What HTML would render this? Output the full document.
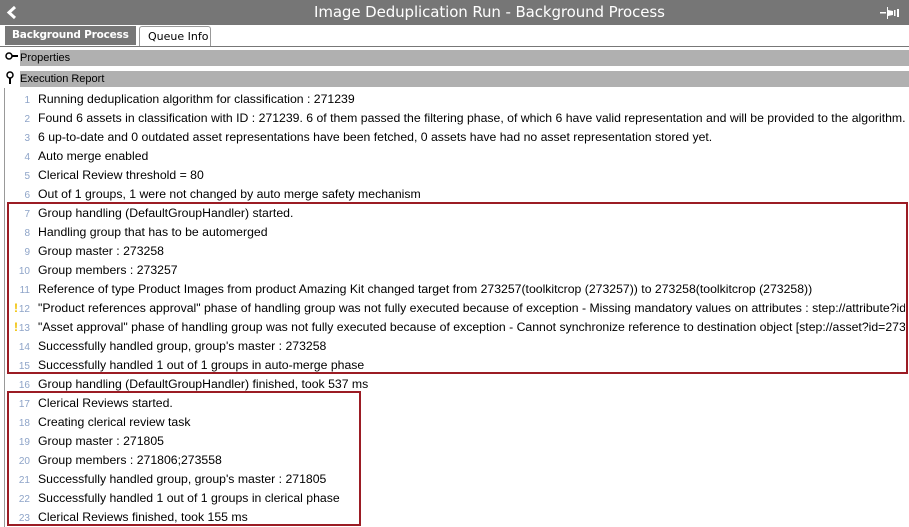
<!DOCTYPE html>
<html><head><style>
*{margin:0;padding:0;box-sizing:border-box}
body{width:909px;height:527px;overflow:hidden;background:#fff;font-family:"Liberation Sans",sans-serif;position:relative}
.titlebg{position:absolute;left:0;top:0;width:909px;height:25px;background:#767676}
.title{position:absolute;left:314px;top:0;height:25px;color:#fff;font-family:"DejaVu Sans",sans-serif;font-size:15px;line-height:25px;white-space:nowrap;letter-spacing:-0.1px}
.tab1{position:absolute;left:5px;top:26px;width:131px;height:19px;background:#777;color:#fff;font-family:"DejaVu Sans",sans-serif;font-weight:bold;font-size:10.5px;line-height:18px;padding-left:7px;white-space:nowrap;overflow:hidden;letter-spacing:-0.2px}
.tab2{position:absolute;left:139px;top:26px;width:72px;height:20px;border:1px solid #999;border-bottom:none;border-radius:3px 3px 0 0;font-family:"DejaVu Sans",sans-serif;font-size:11px;line-height:19px;padding-left:8px;color:#000;white-space:nowrap}
.sep{position:absolute;left:0;top:46px;width:909px;height:1px;background:#777}
.bar{position:absolute;left:20px;width:889px;height:16px;background:#b0b0b0;font-size:11px;line-height:16px;color:#000}
.vl{position:absolute;left:4px;top:88px;width:1px;height:439px;background:#999}
.row{position:absolute;left:0;height:19px;width:909px;white-space:nowrap;overflow:hidden;font-size:12.25px;line-height:19px;color:#000}
.row .n{display:inline-block;width:34px;text-align:right;font-size:10px;color:#8ea4c8;padding-right:4px}
.row .t{position:absolute;left:38px;top:0;width:867px;overflow:hidden}
.w{position:absolute;left:14px;top:0;color:#f0c000;font-weight:bold;font-size:12px}
.box{position:absolute;border:2px solid #9b1c24}
</style></head><body>
<div class="titlebg"></div>
<div class="title">Image Deduplication Run - Background Process</div>
<svg style="position:absolute;left:5px;top:5px" width="14" height="15"><path d="M10 2 L4 7.5 L10 13" stroke="#fff" stroke-width="3" fill="none"/></svg>
<svg style="position:absolute;left:880px;top:6px" width="24" height="14"><rect x="0" y="6" width="6" height="1.5" fill="#fff"/><path d="M7 1 L8 1 L8 13 L7 13 Z M8 4 L13 5 L13 9 L8 10 Z" fill="#fff"/><rect x="14" y="4" width="1.5" height="6" fill="#fff"/><rect x="17" y="3" width="2" height="8" fill="#fff"/></svg>
<div class="tab1">Background Process</div>
<div class="tab2">Queue Info</div>
<div class="sep"></div>
<div class="bar" style="top:50px">Properties</div>
<svg style="position:absolute;left:5px;top:51px" width="14" height="10"><circle cx="4" cy="5" r="3" stroke="#000" stroke-width="1.5" fill="none"/><rect x="7" y="4" width="6" height="2" fill="#000"/></svg>
<div class="bar" style="top:71px">Execution Report</div>
<svg style="position:absolute;left:5px;top:71px" width="10" height="14"><circle cx="5" cy="4" r="3" stroke="#000" stroke-width="1.5" fill="none"/><rect x="4" y="7" width="2" height="6" fill="#000"/></svg>
<div class="vl"></div>

<div class="row" style="top:90px"><span class="n">1</span><span class="t">Running deduplication algorithm for classification : 271239</span></div>
<div class="row" style="top:109px"><span class="n">2</span><span class="t">Found 6 assets in classification with ID : 271239. 6 of them passed the filtering phase, of which 6 have valid representation and will be provided to the algorithm.</span></div>
<div class="row" style="top:128px"><span class="n">3</span><span class="t">6 up-to-date and 0 outdated asset representations have been fetched, 0 assets have had no asset representation stored yet.</span></div>
<div class="row" style="top:147px"><span class="n">4</span><span class="t">Auto merge enabled</span></div>
<div class="row" style="top:166px"><span class="n">5</span><span class="t">Clerical Review threshold = 80</span></div>
<div class="row" style="top:185px"><span class="n">6</span><span class="t">Out of 1 groups, 1 were not changed by auto merge safety mechanism</span></div>
<div class="row" style="top:204px"><span class="n">7</span><span class="t">Group handling (DefaultGroupHandler) started.</span></div>
<div class="row" style="top:223px"><span class="n">8</span><span class="t">Handling group that has to be automerged</span></div>
<div class="row" style="top:242px"><span class="n">9</span><span class="t">Group master : 273258</span></div>
<div class="row" style="top:261px"><span class="n">10</span><span class="t">Group members : 273257</span></div>
<div class="row" style="top:280px"><span class="n">11</span><span class="t">Reference of type Product Images from product Amazing Kit changed target from 273257(toolkitcrop (273257)) to 273258(toolkitcrop (273258))</span></div>
<div class="row" style="top:299px"><span class="w">!</span><span class="n">12</span><span class="t">"Product references approval" phase of handling group was not fully executed because of exception - Missing mandatory values on attributes : step://attribute?id=</span></div>
<div class="row" style="top:318px"><span class="w">!</span><span class="n">13</span><span class="t">"Asset approval" phase of handling group was not fully executed because of exception - Cannot synchronize reference to destination object [step://asset?id=273</span></div>
<div class="row" style="top:337px"><span class="n">14</span><span class="t">Successfully handled group, group's master : 273258</span></div>
<div class="row" style="top:356px"><span class="n">15</span><span class="t">Successfully handled 1 out of 1 groups in auto-merge phase</span></div>
<div class="row" style="top:375px"><span class="n">16</span><span class="t">Group handling (DefaultGroupHandler) finished, took 537 ms</span></div>
<div class="row" style="top:394px"><span class="n">17</span><span class="t">Clerical Reviews started.</span></div>
<div class="row" style="top:413px"><span class="n">18</span><span class="t">Creating clerical review task</span></div>
<div class="row" style="top:432px"><span class="n">19</span><span class="t">Group master : 271805</span></div>
<div class="row" style="top:451px"><span class="n">20</span><span class="t">Group members : 271806;273558</span></div>
<div class="row" style="top:470px"><span class="n">21</span><span class="t">Successfully handled group, group's master : 271805</span></div>
<div class="row" style="top:489px"><span class="n">22</span><span class="t">Successfully handled 1 out of 1 groups in clerical phase</span></div>
<div class="row" style="top:508px"><span class="n">23</span><span class="t">Clerical Reviews finished, took 155 ms</span></div>

<div class="box" style="left:7px;top:202px;width:901px;height:172px"></div>
<div class="box" style="left:7px;top:391px;width:354px;height:135px"></div>
</body></html>
